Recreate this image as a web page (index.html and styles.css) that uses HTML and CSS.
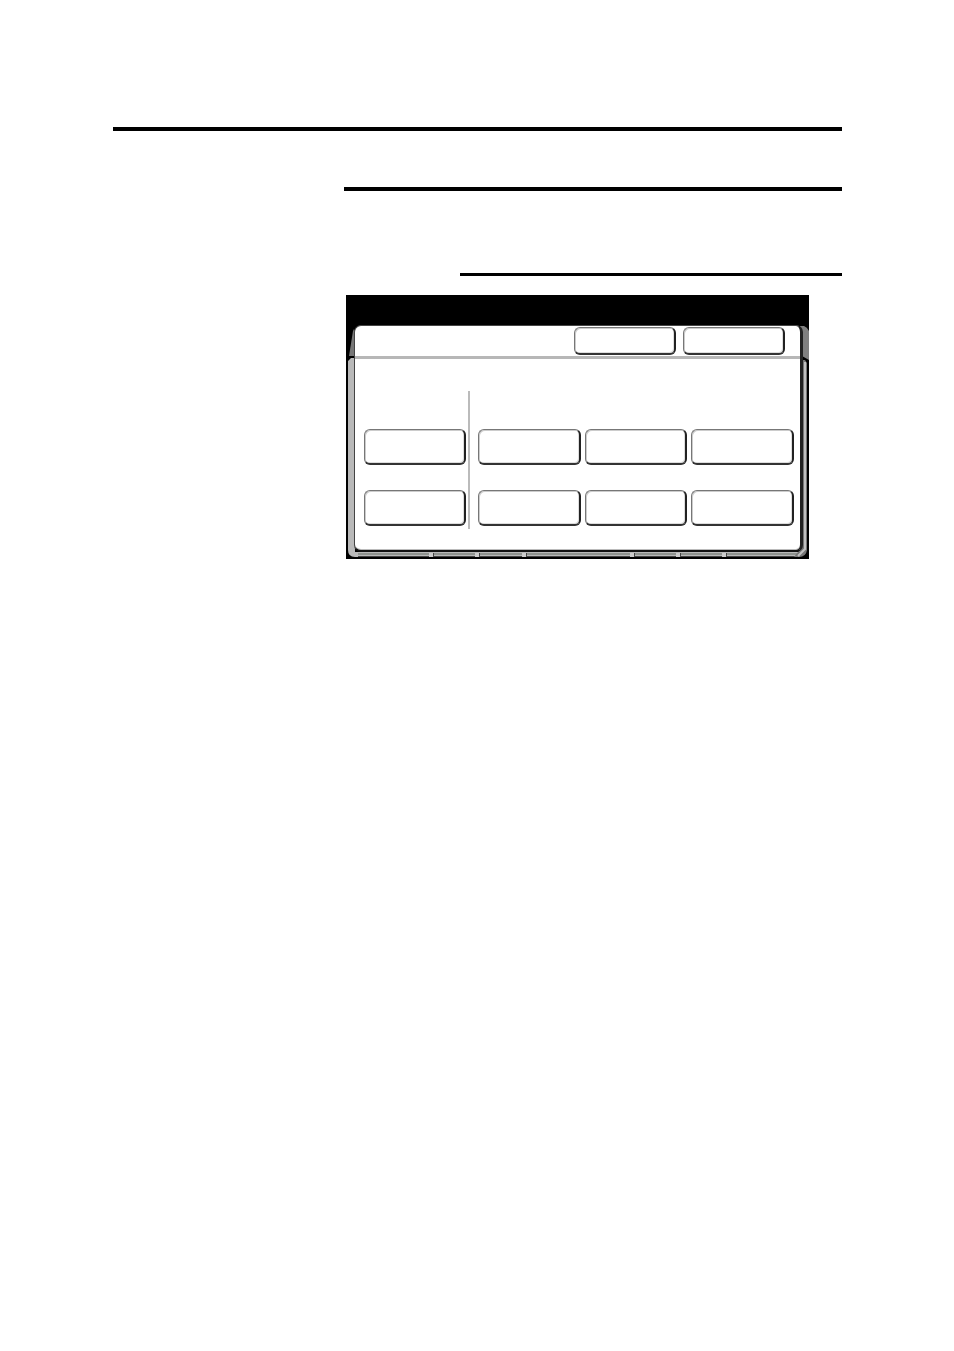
FILE: index.html
```html
<!DOCTYPE html>
<html lang="en">
<head>
    <meta charset="UTF-8">
    <meta name="viewport" content="width=device-width, initial-scale=1.0">
    <title>Control Panel</title>
    <link rel="stylesheet" href="styles.css">
</head>
<body>

    <main class="page">
        <hr class="rule">
        <hr class="rule rule-section">
        <hr class="rule rule-sub">

        <div class="screen">
            <!-- grey bezel behind the panel -->
            <svg class="bezel" viewBox="0 0 463 264" preserveAspectRatio="none" aria-hidden="true">
                <path d="M7 36L8 34V61H3Z" fill="#777"/>
                <path d="M2 66L5 63H9V257H454V262H9Q2 262 2 255Z" fill="#b9b9b9"/>
                <path d="M12 258H452V260H12Z" fill="#8f938f"/>
                <path d="M12 261H452V262H12Z" fill="#444"/>
                <path d="M454 31H458Q461 32 463 36V65L456 61Z" fill="#808080"/>
                <path d="M456 65H459L461 68V255Q460 262 453 262H448L456 252Z" fill="#777"/>
                <path d="M459 67V254L452 261" fill="none" stroke="#c0c0c0" stroke-width="2"/>
                <path d="M83 258h4v4h-4zM129 258h4v4h-4zM176 258h4v4h-4zM284 258h4v4h-4zM330 258h4v4h-4zM376 258h4v4h-4z" fill="#ccc"/>
                <path d="M87 258h1v4h-1zM133 258h1v4h-1zM180 258h1v4h-1zM288 258h1v4h-1zM334 258h1v4h-1zM380 258h1v4h-1z" fill="#444"/>
            </svg>

            <div class="panel">
                <div class="panel-header">
                    <button class="key key-small" type="button" aria-label="Cancel"></button>
                    <button class="key key-small" type="button" aria-label="Save"></button>
                </div>
                <div class="panel-body">
                    <div class="keys keys-side">
                        <button class="key" type="button" aria-label="Side 1"></button>
                        <button class="key" type="button" aria-label="Side 2"></button>
                    </div>
                    <div class="keys keys-main">
                        <button class="key" type="button" aria-label="Option 1"></button>
                        <button class="key" type="button" aria-label="Option 2"></button>
                        <button class="key" type="button" aria-label="Option 3"></button>
                        <button class="key" type="button" aria-label="Option 4"></button>
                        <button class="key" type="button" aria-label="Option 5"></button>
                        <button class="key" type="button" aria-label="Option 6"></button>
                    </div>
                </div>
            </div>
        </div>
    </main>

</body>
</html>
```
FILE: styles.css
```css
* {
    box-sizing: border-box;
}
body {
    margin: 0;
    background-color: #fff;
    font-family: "Liberation Sans", Arial, sans-serif;
}
.page {
    padding: 127px 112px 40px 113px;
}
.rule {
    height: 4px;
    margin: 0;
    border: none;
    background-color: #000;
}
.rule-section {
    margin: 56px 0 0 231px;
}
.rule-sub {
    height: 3px;
    margin: 82px 0 0 347px;
}
.screen {
    position: relative;
    margin: 19px 33px 0 233px;
    padding: 30px 6px 7px 8px;
    background-color: #000;
}
/* sits under the panel */
.bezel {
    position: absolute;
    inset: 0;
    width: 100%;
    height: 100%;
}
.panel {
    position: relative;
    border: 1px solid #444;
    border-right: 3px solid #222;
    border-bottom: 2px solid #111;
    border-radius: 7px;
    background-color: #fff;
    box-shadow: inset 0 -1px #bbb;
}
.panel-header {
    display: flex;
    justify-content: flex-end;
    gap: 7px;
    padding: 1px 15px 1px 0;
    border-bottom: 3px solid #b7b7b7;
}
.panel-body {
    display: grid;
    grid-template-columns: 106px 1fr;
    padding: 32px 6px 21px 9px;
}
.keys {
    display: grid;
    gap: 25px 4px;
    padding: 38px 0 3px;
}
.keys-side {
    padding-right: 2px;
    border-right: 2px solid #bbb;
}
.keys-main {
    grid-template-columns: repeat(3, 1fr);
    padding-left: 8px;
}
.key {
    height: 36px;
    padding: 0;
    border: 1px solid #777;
    border-right: 2px solid #222;
    border-bottom: 2px solid #333;
    border-radius: 6px;
    background-color: #fff;
    box-shadow: inset 1px 1px #ccc, inset -1px -1px #ddd;
    cursor: pointer;
}
.key:active {
    background-color: #ddd;
}
.key-small {
    width: 102px;
    height: 28px;
}
```
